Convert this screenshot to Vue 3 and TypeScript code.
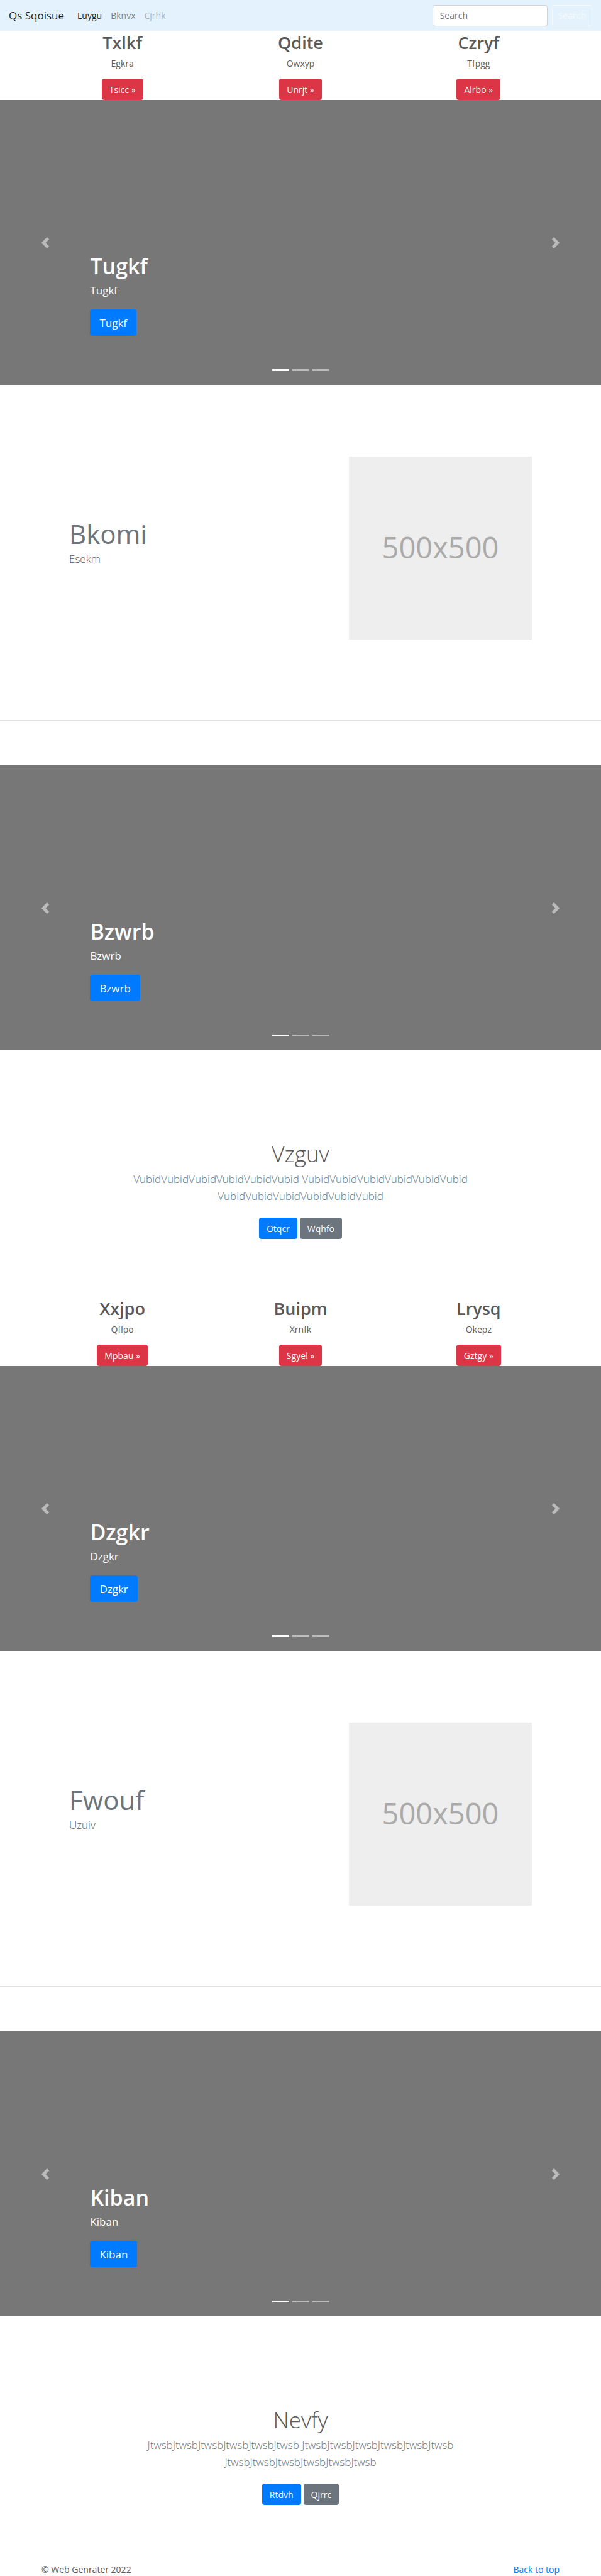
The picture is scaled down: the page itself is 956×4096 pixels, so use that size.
<script setup lang="ts">
import { ref } from 'vue'

interface Card { title: string; text: string; action: string }
interface Section {
  cards: Card[]
  first: string
  feature: { title: string; text: string }
  second: string
  intro: { title: string; text: string; primary: string; secondary: string }
}

const query = ref('')

const navLinks = [
  { label: 'Luygu', state: 'active' },
  { label: 'Bknvx', state: '' },
  { label: 'Cjrhk', state: 'disabled' },
]

const sections: Section[] = [
  {
    cards: [
      { title: 'Txlkf', text: 'Egkra', action: 'Tsicc' },
      { title: 'Qdite', text: 'Owxyp', action: 'Unrjt' },
      { title: 'Czryf', text: 'Tfpgg', action: 'Alrbo' },
    ],
    first: 'Tugkf',
    feature: { title: 'Bkomi', text: 'Esekm' },
    second: 'Bzwrb',
    intro: {
      title: 'Vzguv',
      text: Array(3).fill('Vubid'.repeat(6)).join(' '),
      primary: 'Otqcr',
      secondary: 'Wqhfo',
    },
  },
  {
    cards: [
      { title: 'Xxjpo', text: 'Qflpo', action: 'Mpbau' },
      { title: 'Buipm', text: 'Xrnfk', action: 'Sgyel' },
      { title: 'Lrysq', text: 'Okepz', action: 'Gztgy' },
    ],
    first: 'Dzgkr',
    feature: { title: 'Fwouf', text: 'Uzuiv' },
    second: 'Kiban',
    intro: {
      title: 'Nevfy',
      text: Array(3).fill('Jtwsb'.repeat(6)).join(' '),
      primary: 'Rtdvh',
      secondary: 'Qjrrc',
    },
  },
]
</script>

<template>
  <div id="top" class="page">
    <header class="navbar">
      <a class="brand" href="#top">Qs Sqoisue</a>
      <nav class="links" aria-label="Main">
        <a v-for="l in navLinks" :key="l.label" href="#top" :class="['link', l.state]">{{ l.label }}</a>
      </nav>
      <form class="search" role="search" @submit.prevent>
        <input v-model="query" class="field" type="search" placeholder="Search" aria-label="Search" />
        <button class="btn outline" type="submit">Search</button>
      </form>
    </header>

    <main>
      <template v-for="(s, i) in sections" :key="i">
        <section class="cards">
          <article v-for="c in s.cards" :key="c.title" class="card">
            <h2>{{ c.title }}</h2>
            <p>{{ c.text }}</p>
            <a class="btn danger" href="#top">{{ c.action }} »</a>
          </article>
        </section>

        <template v-for="(name, n) in [s.first, s.second]" :key="name">
          <section class="carousel" :aria-label="name">
            <button class="control prev" type="button" aria-label="Previous">
              <svg viewBox="0 0 8 8" aria-hidden="true"><path d="M5.25 0l-4 4 4 4 1.5-1.5L4.25 4l2.5-2.5L5.25 0z" /></svg>
            </button>
            <div class="caption">
              <h1>{{ name }}</h1>
              <p>{{ name }}</p>
              <a class="btn primary large" href="#top">{{ name }}</a>
            </div>
            <button class="control next" type="button" aria-label="Next">
              <svg viewBox="0 0 8 8" aria-hidden="true"><path d="M2.75 0l-1.5 1.5L3.75 4l-2.5 2.5L2.75 8l4-4-4-4z" /></svg>
            </button>
            <div class="indicators">
              <button v-for="k in 3" :key="k" type="button" :class="{ on: k === 1 }" :aria-label="`Slide ${k}`"></button>
            </div>
          </section>

          <template v-if="n === 0">
            <section class="feature">
              <div class="feature-text">
                <h2>{{ s.feature.title }}</h2>
                <p>{{ s.feature.text }}</p>
              </div>
              <div class="placeholder">500x500</div>
            </section>
            <hr class="divider" />
          </template>
        </template>

        <section class="intro">
          <h1>{{ s.intro.title }}</h1>
          <p>{{ s.intro.text }}</p>
          <div class="actions">
            <a class="btn primary" href="#top">{{ s.intro.primary }}</a>
            <a class="btn secondary" href="#top">{{ s.intro.secondary }}</a>
          </div>
        </section>
      </template>
    </main>

    <footer class="footer">
      <span>© Web Genrater 2022</span>
      <a href="#top">Back to top</a>
    </footer>
  </div>
</template>

<style>
body {
  margin: 0;
  background: #fff;
}
</style>

<style scoped>
.page,
.page * {
  box-sizing: border-box;
}

.page {
  font-family: "Segoe UI", "Open Sans", "Noto Sans", sans-serif;
  font-size: 14px;
  line-height: 21px;
  color: #5a5a5a;
}

h1,
h2,
p {
  margin: 0;
}

a {
  text-decoration: none;
}

.navbar {
  display: flex;
  align-items: center;
  height: 49px;
  padding: 0 14px;
  background: #e3f2fd;
}

.brand {
  margin-right: 14px;
  font-size: 17px;
  line-height: 27px;
  color: rgba(0, 0, 0, 0.9);
}

.links {
  display: flex;
}

.link {
  padding: 0 7px;
  color: rgba(0, 0, 0, 0.5);
}

.link.active {
  color: rgba(0, 0, 0, 0.9);
}

.link.disabled {
  color: rgba(0, 0, 0, 0.3);
}

.search {
  display: flex;
  gap: 7px;
  margin-left: auto;
}

.field {
  width: 183px;
  height: 34px;
  padding: 0 11px;
  border: 1px solid #ced4da;
  border-radius: 4px;
  background: #fff;
  font: inherit;
  color: #495057;
  appearance: none;
}

.field::placeholder {
  color: #6c757d;
  opacity: 1;
}

.btn {
  display: inline-flex;
  align-items: center;
  justify-content: center;
  height: 34px;
  padding: 0 11px;
  border: 1px solid transparent;
  border-radius: 4px;
  font: inherit;
  color: #fff;
  cursor: pointer;
}

.btn.outline {
  padding: 0 9px;
  border-color: #f8f9fa;
  background: transparent;
  color: #f8f9fa;
}

.btn.danger {
  background: #dc3545;
}

.btn.primary {
  background: #007bff;
}

.btn.secondary {
  background: #6c757d;
}

.btn.large {
  height: 42px;
  padding: 0 14px;
  font-size: 17px;
}

.cards {
  display: grid;
  grid-template-columns: repeat(3, 1fr);
  max-width: 850px;
  margin: 0 auto;
}

.card {
  display: flex;
  flex-direction: column;
  align-items: center;
}

.card h2 {
  margin-bottom: 4px;
  font-size: 27px;
  font-weight: 600;
  line-height: 37px;
}

.card p {
  margin-bottom: 14px;
}

.carousel {
  position: relative;
  display: grid;
  grid-template-columns: 15% 1fr 15%;
  height: 453px;
  background: #777;
}

.control {
  display: flex;
  align-items: center;
  justify-content: center;
  padding: 0;
  border: 0;
  background: none;
  opacity: 0.5;
  cursor: pointer;
}

.control svg {
  width: 18px;
  height: 18px;
  fill: #fff;
}

.caption {
  display: flex;
  flex-direction: column;
  align-items: flex-start;
  justify-content: flex-end;
  padding-bottom: 78px;
  color: #fff;
}

.caption h1 {
  margin-bottom: 4px;
  font-size: 34px;
  font-weight: 600;
  line-height: 44px;
}

.caption p {
  margin-bottom: 18px;
  font-size: 17px;
  line-height: 25px;
}

.indicators {
  position: absolute;
  right: 0;
  bottom: 22px;
  left: 0;
  display: flex;
  justify-content: center;
  gap: 5px;
}

.indicators button {
  width: 27px;
  height: 3px;
  padding: 0;
  border: 0;
  background: #fff;
  opacity: 0.5;
}

.indicators .on {
  opacity: 1;
}

.feature {
  display: flex;
  align-items: flex-start;
  justify-content: space-between;
  max-width: 736px;
  margin: 0 auto;
  padding: 114px 0 128px;
}

.feature-text {
  padding-top: 96px;
}

.feature h2 {
  font-size: 42px;
  font-weight: 400;
  line-height: 53px;
  color: #6c757d;
}

.feature p {
  font-size: 17px;
  font-weight: 300;
  line-height: 27px;
}

.placeholder {
  display: flex;
  align-items: center;
  justify-content: center;
  width: 291px;
  aspect-ratio: 1;
  padding-bottom: 4px;
  background: #eee;
  font-size: 47px;
  line-height: 56px;
  color: #aaa;
}

.divider {
  height: 1px;
  margin: 0 0 71px;
  border: 0;
  background: #e5e5e5;
}

.intro {
  display: flex;
  flex-direction: column;
  align-items: center;
  max-width: 620px;
  margin: 0 auto;
  padding: 142px 0 92px;
  text-align: center;
}

.intro h1 {
  margin-bottom: 4px;
  font-size: 35px;
  font-weight: 300;
  line-height: 45px;
}

.intro p {
  margin-bottom: 21px;
  font-size: 17px;
  font-weight: 300;
  line-height: 27px;
  color: #6c757d;
}

.actions {
  display: flex;
  gap: 4px;
}

.footer {
  display: flex;
  justify-content: space-between;
  max-width: 850px;
  margin: 0 auto;
  padding: 0 13px;
}

.footer a {
  color: #007bff;
}
</style>
